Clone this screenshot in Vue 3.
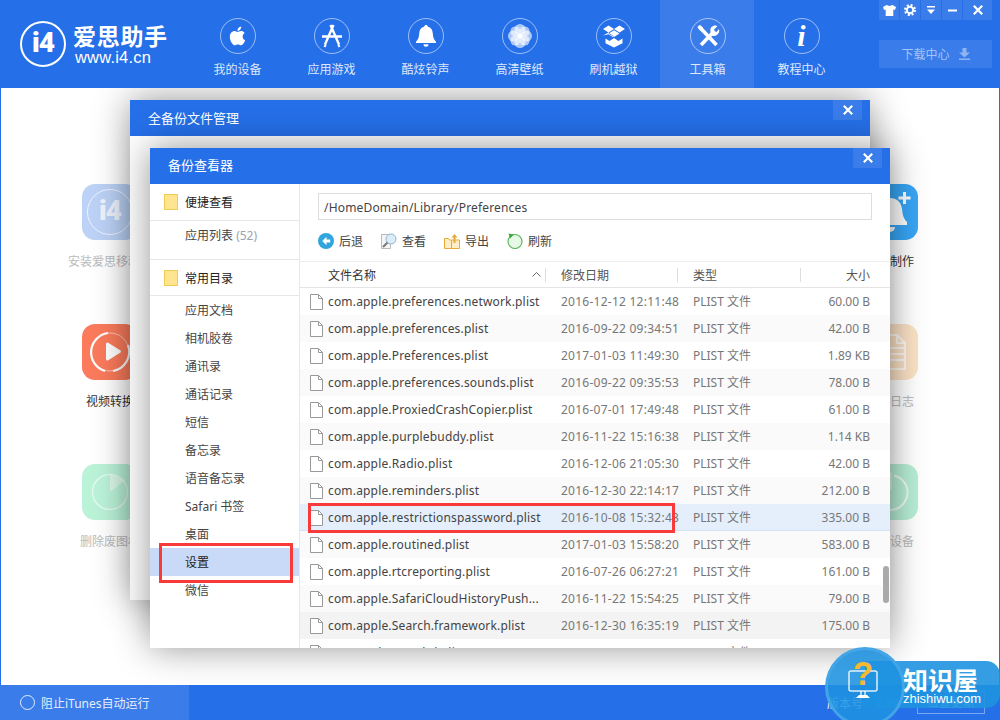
<script setup>
const navItems = [
  { key: 'device', label: '我的设备' },
  { key: 'app', label: '应用游戏' },
  { key: 'bell', label: '酷炫铃声' },
  { key: 'flower', label: '高清壁纸' },
  { key: 'box', label: '刷机越狱' },
  { key: 'tools', label: '工具箱', active: true },
  { key: 'info', label: '教程中心' },
]

const tiles = [
  { key: 'i4', label: '安装爱思移动端', cls: 'dim' },
  { key: 'ring', label: '铃声制作', cls: '' },
  { key: 'video', label: '视频转换', cls: '' },
  { key: 'doc', label: '查看日志', cls: 'dim' },
  { key: 'pie', label: '删除废图标', cls: 'dim' },
  { key: 'power', label: '关闭设备', cls: 'dim' },
]

const folders = ['应用文档', '相机胶卷', '通讯录', '通话记录', '短信', '备忘录', '语音备忘录', 'Safari 书签', '桌面', '设置', '微信']

const files = [
  ['com.apple.preferences.network.plist', '2016-12-12 12:11:48', '60.00 B', ''],
  ['com.apple.preferences.plist', '2016-09-22 09:34:51', '42.00 B', 'alt'],
  ['com.apple.Preferences.plist', '2017-01-03 11:49:30', '1.89 KB', ''],
  ['com.apple.preferences.sounds.plist', '2016-09-22 09:35:53', '78.00 B', 'alt'],
  ['com.apple.ProxiedCrashCopier.plist', '2016-07-01 17:49:48', '61.00 B', ''],
  ['com.apple.purplebuddy.plist', '2016-11-22 15:16:38', '1.14 KB', 'alt'],
  ['com.apple.Radio.plist', '2016-12-06 21:05:30', '42.00 B', ''],
  ['com.apple.reminders.plist', '2016-12-30 22:14:17', '212.00 B', 'alt'],
  ['com.apple.restrictionspassword.plist', '2016-10-08 15:32:43', '335.00 B', 'sel'],
  ['com.apple.routined.plist', '2017-01-03 15:58:20', '583.00 B', 'alt'],
  ['com.apple.rtcreporting.plist', '2016-07-26 06:27:21', '161.00 B', ''],
  ['com.apple.SafariCloudHistoryPush...', '2016-11-22 15:54:25', '79.00 B', 'alt'],
  ['com.apple.Search.framework.plist', '2016-12-30 16:35:19', '175.00 B', 'hover'],
  ['com.apple.searchd.plist', '2016-12-30 16:35:20', '180.00 B', ''],
]
</script>

<template>
  <div class="app">
    <header class="topbar">
      <div class="logo">
        <div class="logo-mark">i4</div>
        <div class="logo-text">
          <div class="logo-cn">爱思助手</div>
          <div class="logo-url">www.i4.cn</div>
        </div>
      </div>

      <nav class="nav">
        <div v-for="item in navItems" :key="item.key" :class="['nav-item', { active: item.active }]">
          <div class="nav-ring">
            <svg v-if="item.key === 'device'" width="22" height="22" viewBox="0 0 24 24" fill="#fff"><path d="M17.05 12.54c-.03-2.6 2.12-3.85 2.22-3.91-1.21-1.77-3.09-2.01-3.76-2.04-1.6-.16-3.12.94-3.93.94-.81 0-2.06-.92-3.39-.89-1.74.03-3.35 1.01-4.25 2.57-1.81 3.14-.46 7.8 1.3 10.35.86 1.25 1.89 2.65 3.24 2.6 1.3-.05 1.79-.84 3.36-.84s2.01.84 3.39.81c1.4-.02 2.28-1.27 3.14-2.53.99-1.45 1.4-2.85 1.42-2.92-.03-.01-2.72-1.04-2.74-4.14zM14.47 4.9c.72-.87 1.2-2.08 1.07-3.28-1.03.04-2.28.69-3.02 1.55-.66.77-1.24 2-1.09 3.18 1.15.09 2.32-.58 3.04-1.45z"/></svg>
            <svg v-else-if="item.key === 'app'" width="28" height="28" viewBox="0 0 28 28" fill="none" stroke="#fff" stroke-width="2.4"><path d="M15.5 3 7 22.5M12.5 3 21 22.5M4 14.5h20" /><path d="M6.5 25l1.2-2.5M21.5 25l-1.2-2.5" stroke-width="2"/></svg>
            <svg v-else-if="item.key === 'bell'" width="22" height="24" viewBox="0 0 22 24" fill="#fff"><path d="M11 1c1 0 1.7.7 1.8 1.7C16 3.4 17.6 6 17.8 9.500c.2 3.800 1 6 3.200 8.200v1.300H1v-1.300c2.200-2.200 3-4.400 3.200-8.200C4.400 6 6 3.400 9.200 2.700 9.300 1.700 10 1 11 1z"/><path d="M8.500 20.200h5a2.500 2.500 0 0 1-5 0z"/></svg>
            <svg v-else-if="item.key === 'flower'" width="26" height="26" viewBox="0 0 26 26"><g fill="#fff" fill-opacity=".62"><circle cx="13" cy="6.500" r="5.500"/><circle cx="13" cy="19.500" r="5.500"/><circle cx="6.500" cy="13" r="5.500"/><circle cx="19.500" cy="13" r="5.500"/><circle cx="8.400" cy="8.400" r="5"/><circle cx="17.600" cy="8.400" r="5"/><circle cx="8.400" cy="17.600" r="5"/><circle cx="17.600" cy="17.600" r="5"/></g><circle cx="13" cy="13" r="2.500" fill="#fff"/></svg>
            <svg v-else-if="item.key === 'box'" width="24" height="24" viewBox="0 0 24 24" fill="#fff"><path d="M6.500 1.500 12 5 6.500 8.500 1 5zM17.500 1.500 23 5l-5.500 3.500L12 5zM6.500 9.500 12 6.200l5.500 3.300L12 13zM1 11.500l5.500-3 5.500 4-1 .8-4.500-3z" fill-rule="evenodd"/><path d="M3.500 14.500l4 2.500 4.500-3 4.500 3 4-2.500v4.700L12 23.500l-8.500-4.300z"/></svg>
            <svg v-else-if="item.key === 'tools'" width="24" height="24" viewBox="0 0 24 24" fill="none" stroke="#fff"><path d="M3 2.500 20.500 21" stroke-width="3.600"/><path d="M3.500 1 1.500 3l2.500 3.500 2.500-.5.500-2.500z" fill="#fff" stroke="none"/><path d="M5 21 16 9.500" stroke-width="3.600"/><path d="M15 3.500c2-2.300 5-2.500 6.500-1.500L18 5.500l.8 1.700 1.700.8L23 5c.8 2.500-.2 5-2.500 6.300-1.500.8-3.300.8-4.500.2-1.700-2.300-2.200-5.700-1-8z" fill="#fff" stroke="none"/></svg>
            <span v-else class="nav-i">i</span>
          </div>
          <div class="nav-label">{{ item.label }}</div>
        </div>
      </nav>

      <div class="top-right">
        <div class="win-btns">
          <span class="win-btn">
            <svg width="13" height="11" viewBox="0 0 13 11" fill="#fff"><path d="M3.500 0 6.500 1 9.500 0 13 2l-1 3-1.700-.5V11H2.700V4.500L1 5 0 2z"/></svg>
          </span>
          <span class="win-btn">
            <svg width="12" height="12" viewBox="0 0 12 12" fill="none" stroke="#fff"><circle cx="6" cy="6" r="3.200" stroke-width="2"/><circle cx="6" cy="6" r="5" stroke-width="2" stroke-dasharray="2 1.930"/></svg>
          </span>
          <span class="win-btn">
            <svg width="10" height="10" viewBox="0 0 10 10" fill="#fff"><path d="M1 1h8v1.500H1zM1 4.500h8L5 9z"/></svg>
          </span>
          <span class="win-btn">
            <svg width="9" height="3" viewBox="0 0 9 3" fill="#fff"><path d="M0 .5h9v2H0z"/></svg>
          </span>
          <span class="win-btn close">
            <svg width="10" height="10" viewBox="0 0 10 10" stroke="#fff" stroke-width="2.200"><path d="M.8.8l8.400 8.400M9.200.8.8 9.200"/></svg>
          </span>
        </div>
        <div class="download">
          下载中心
          <svg width="11" height="12" viewBox="0 0 11 12" fill="#8db3f2"><path d="M3.500 0h4v4.500H11L5.500 9.500 0 4.500h3.500zM0 10.500h11V12H0z"/></svg>
        </div>
      </div>
    </header>

    <main class="main">
      <div class="tiles">
        <div v-for="tile in tiles" :key="tile.key" :class="['tile', tile.cls]">
          <div :class="['tile-icon', tile.key]">
            <div v-if="tile.key === 'i4'" class="tile-i4">i4</div>
            <svg v-else-if="tile.key === 'ring'" width="56" height="56" viewBox="0 0 56 56" fill="#fff"><path d="M28 14c7 0 11 4 12 11 .6 5 1 9 5 13v3H11v-3c4-4 4.400-8 5-13 1-7 5-11 12-11z"/><path d="M23 43h10a5 5 0 0 1-10 0z"/><path d="M41 8h3v4.500h4.500v3H44V20h-3v-4.500h-4.500v-3H41z"/></svg>
            <svg v-else-if="tile.key === 'video'" width="56" height="56" viewBox="0 0 56 56" fill="none" stroke="#fff"><circle cx="28" cy="28" r="19" stroke-width=".8" stroke-opacity=".7"/><path d="M26 9a19.500 19.500 0 0 0-3 38M31 47a19.500 19.500 0 0 0 15-26" stroke-width="2.200"/><path d="M24 20c0-1.200 1.200-1.900 2.200-1.300l12 7.500c1 .6 1 2 0 2.600l-12 7.500c-1 .6-2.200-.1-2.200-1.300z" fill="#fff" stroke="none"/></svg>
            <svg v-else-if="tile.key === 'doc'" width="56" height="56" viewBox="0 0 56 56" fill="none" stroke="#fff" stroke-opacity=".75" stroke-width="2"><path d="M18 11h17l8 8v26H18z"/><path d="M35 11v8h8M23 24h19M23 30h19M23 36h19"/></svg>
            <svg v-else-if="tile.key === 'pie'" width="56" height="56" viewBox="0 0 56 56" fill="none" stroke="#fff" stroke-opacity=".55" stroke-width="1.500"><circle cx="28" cy="28" r="17.500"/><path d="M28 28V11a17 17 0 0 1 13.500 6.500z" fill="#fff" fill-opacity=".45" stroke="none"/></svg>
            <svg v-else width="56" height="56" viewBox="0 0 56 56" fill="none" stroke="#fff" stroke-opacity=".75" stroke-width="2"><path d="M32 11.500A17.500 17.500 0 1 1 24 11.500"/><path d="M28 8v18" stroke-width="3" stroke-opacity=".5"/></svg>
          </div>
          <div class="tile-label">{{ tile.label }}</div>
        </div>
      </div>

      <section class="dialog outer">
        <div class="dialog-title">
          全备份文件管理
          <span class="dialog-close"><svg width="10" height="10" viewBox="0 0 10 10" stroke="#fff" stroke-width="2.200"><path d="M.8.8l8.400 8.400M9.200.8.8 9.200"/></svg></span>
        </div>
      </section>

      <section class="dialog inner">
        <div class="dialog-title">
          备份查看器
          <span class="dialog-close"><svg width="10" height="10" viewBox="0 0 10 10" stroke="#fff" stroke-width="2.200"><path d="M.8.8l8.400 8.400M9.200.8.8 9.200"/></svg></span>
        </div>

        <div class="viewer">
          <aside class="side">
            <div class="side-head first"><i class="folder"></i>便捷查看</div>
            <div class="side-sub">应用列表 <span class="count">(52)</span></div>
            <div class="side-head"><i class="folder"></i>常用目录</div>
            <div v-for="name in folders" :key="name" :class="['side-item', { selected: name === '设置' }]">{{ name }}</div>
          </aside>

          <div class="content">
            <div class="path">/HomeDomain/Library/Preferences</div>

            <div class="toolbar">
              <span class="tool">
                <svg width="16" height="16" viewBox="0 0 16 16"><circle cx="8" cy="8" r="8" fill="#31a5dd"/><path d="M8.500 3.800 4.300 8l4.200 4.200V9.500h3.700v-3H8.500z" fill="#fff"/></svg>
                后退
              </span>
              <span class="tool">
                <svg width="16" height="16" viewBox="0 0 16 16" fill="none"><path d="M.5 1.500h9v14h-9z" fill="#f5f5f5" stroke="#bbb"/><circle cx="10" cy="6" r="5" fill="#dcedf7" stroke="#8fb8d2"/><path d="M6.500 9.500 2 14" stroke="#777" stroke-width="2"/></svg>
                查看
              </span>
              <span class="tool">
                <svg width="16" height="16" viewBox="0 0 16 16" fill="none"><path d="M.5 5.500h4l1 1.500h2v8.500h-7z M7.500 7h8v8.500h-8z" fill="#fdeec6" stroke="#e5a93c"/><path d="M10.500 1 7.500 4.500h2V10h2V4.500h2z" fill="#e5a93c"/></svg>
                导出
              </span>
              <span class="tool">
                <svg width="16" height="16" viewBox="0 0 16 16" fill="none"><circle cx="8" cy="8.500" r="7" fill="#e8f8e6" stroke="#5cb85c" stroke-width="1.200"/><path d="M1.500 .5 7 1.500 3 5.500z" fill="#3ea83e"/></svg>
                刷新
              </span>
            </div>

            <div class="thead">
              <div class="th name">文件名称<svg class="caret" width="9" height="5" viewBox="0 0 9 5" fill="none" stroke="#666"><path d="M.5 4.500l4-4 4 4"/></svg></div>
              <div class="th">修改日期</div>
              <div class="th">类型</div>
              <div class="th size">大小</div>
            </div>

            <div class="tbody">
              <div v-for="f in files" :key="f[0]" :class="['row', f[3]]">
                <div class="cell name">
                  <svg width="13" height="16" viewBox="0 0 13 16" fill="#fff" stroke="#999"><path d="M.5.500h8l4 4v11H.5z"/><path d="M8.500.500v4h4" fill="none"/></svg>
                  <span>{{ f[0] }}</span>
                </div>
                <div class="cell date">{{ f[1] }}</div>
                <div class="cell">PLIST 文件</div>
                <div class="cell size">{{ f[2] }}</div>
              </div>
              <div class="scroll-thumb"></div>
            </div>
          </div>
        </div>

        <div class="mark mark-side"></div>
        <div class="mark mark-row"></div>
      </section>
    </main>

    <footer class="footer">
      <div class="itunes"><i class="radio"></i>阻止iTunes自动运行</div>
      <div class="version">版本号：7.29</div>
      <div class="update">检查更新</div>
    </footer>

    <div class="badge">
      <div class="badge-bar"></div>
      <div class="badge-disc"></div>
      <svg class="badge-screen" width="30" height="30" viewBox="0 0 30 30" fill="none" stroke="#fff" stroke-opacity=".85" stroke-width="1.500"><rect x="1" y="1" width="28" height="20" rx="2"/><path d="M13 21v5M17 21v5" /><path d="M8 28h14l-3-3h-8z" fill="#fff" stroke="none"/></svg>
      <span class="badge-q">?</span>
      <div class="badge-cn">知识屋</div>
      <div class="badge-en">zhishiwu.com</div>
    </div>
  </div>
</template>

<style>
html, body {
  margin: 0;
  background: #fff;
}
</style>

<style scoped>
.app {
  position: relative;
  display: flex;
  flex-direction: column;
  width: 1000px;
  height: 720px;
  overflow: hidden;
  font-family: "Noto Sans", "Noto Sans CJK SC", sans-serif;
  font-size: 12px;
  color: #333;
}

/* top bar */
.topbar {
  display: flex;
  flex: none;
  height: 88px;
  background: #256fe8;
  color: #fff;
}

.logo {
  display: flex;
  flex: none;
  width: 190px;
  padding: 21px 0 0 20px;
  box-sizing: border-box;
}

.logo-mark {
  width: 46px;
  height: 46px;
  box-sizing: border-box;
  border: 2px solid #fff;
  border-radius: 50%;
  font: 900 28px/40px Roboto, sans-serif;
  letter-spacing: -1px;
  text-align: center;
}

.logo-text {
  margin-left: 7px;
}

.logo-cn {
  margin-top: 2px;
  font-size: 23px;
  font-weight: 700;
  line-height: 27px;
  letter-spacing: .7px;
}

.logo-url {
  margin-left: 2px;
  font-size: 16.500px;
  line-height: 15px;
  letter-spacing: .2px;
  font-family: "Liberation Sans", sans-serif;
}

.nav {
  display: flex;
}

.nav-item {
  display: flex;
  flex-direction: column;
  align-items: center;
  width: 94px;
  padding: 18px 0 0 1px;
  box-sizing: border-box;
}

.nav-item.active {
  background: #3a7ce9;
}

.nav-ring {
  display: flex;
  align-items: center;
  justify-content: center;
  width: 36px;
  height: 36px;
  box-sizing: border-box;
  border: 1px solid rgba(255, 255, 255, .55);
  border-radius: 50%;
}

.nav-i {
  font: italic bold 30px/34px "Liberation Serif", serif;
}

.nav-label {
  margin-top: 7px;
  line-height: 18px;
  color: #dfe9fb;
}

.top-right {
  display: flex;
  flex-direction: column;
  margin-left: 31px;
  width: 113px;
}

.win-btns {
  display: flex;
  gap: 1px;
}

.win-btn {
  display: flex;
  align-items: center;
  justify-content: center;
  width: 20px;
  height: 20px;
  background: #3a7ce9;
}

.win-btn.close {
  width: 29px;
}

.download {
  display: flex;
  align-items: center;
  justify-content: center;
  gap: 9px;
  height: 28px;
  margin-top: 20px;
  background: #3a7ce9;
  color: #a5c4f6;
}

/* page behind the dialogs */
.main {
  position: relative;
  flex: 1;
  min-height: 0;
  overflow: hidden;
  background: #fff;
  border-left: 1px solid #256fe8;
  border-right: 1px solid #256fe8;
}

.tiles {
  display: grid;
  grid-template-columns: 96px 96px;
  grid-auto-rows: 140px;
  justify-content: space-between;
  padding: 96px 61px 0;
}

.tile {
  display: flex;
  flex-direction: column;
  align-items: center;
  white-space: nowrap;
}

.tile-icon {
  width: 56px;
  height: 56px;
  flex: none;
  border-radius: 13px;
}

.tile-label {
  margin-top: 13px;
  line-height: 18px;
  color: #333;
}

.tile.dim .tile-label {
  color: #bbb;
}

.tile-icon.i4 { background: #bcd2f6; }
.tile-icon.ring { background: #38a6f6; }
.tile-icon.video { background: #fb7b5c; }
.tile-icon.doc { background: #fbe2c6; }
.tile-icon.pie { background: #bbf3d8; }
.tile-icon.power { background: #b7eed6; }

.tile-i4 {
  width: 46px;
  height: 46px;
  margin: 5px;
  position: relative;
  top: 0;
  box-sizing: border-box;
  border: 1px solid #f0f5ff;
  border-radius: 50%;
  color: #eef3fd;
  font: 900 28px/42px Roboto, sans-serif;
  letter-spacing: -1px;
  text-align: center;
}

/* dialogs */
.dialog {
  position: absolute;
  width: 740px;
  height: 500px;
  background: #fff;
  box-shadow: 0 0 34px rgba(0, 0, 0, .42);
}

.dialog.outer {
  left: 129px;
  top: 12px;
}

.dialog.inner {
  left: 149px;
  top: 60px;
  display: flex;
  flex-direction: column;
}

.dialog-title {
  position: relative;
  flex: none;
  height: 36px;
  padding-left: 18px;
  background: #256fe8;
  color: #fff;
  font-size: 13px;
  line-height: 36px;
}

.dialog.inner .dialog-title {
  line-height: 35px;
}

.dialog-close {
  position: absolute;
  top: 0;
  right: 8px;
  display: flex;
  align-items: center;
  justify-content: center;
  width: 29px;
  height: 20px;
  background: #3a7ce9;
}

.viewer {
  display: flex;
  flex: 1;
  min-height: 0;
}

.side {
  flex: none;
  width: 150px;
  box-sizing: border-box;
  border-right: 1px solid #e8e8e8;
}

.side-head {
  display: flex;
  align-items: center;
  height: 36px;
  padding-left: 14px;
  box-sizing: border-box;
  border-bottom: 1px solid #e6e6e6;
  color: #222;
}

.side-head.first {
  height: 37px;
}

.folder {
  width: 14px;
  height: 16px;
  margin-right: 7px;
  background: #ffe58f;
  border: 1px solid #f2cb55;
  box-sizing: border-box;
}

.side-sub {
  height: 39px;
  padding-left: 35px;
  box-sizing: border-box;
  border-bottom: 1px solid #e6e6e6;
  line-height: 30px;
  color: #444;
}

.count {
  color: #9aa3b2;
}

.side-item {
  height: 28px;
  padding-left: 35px;
  line-height: 30px;
  color: #444;
}

.side-item.selected {
  background: #c8daf7;
  color: #222;
}

.content {
  display: flex;
  flex: 1;
  flex-direction: column;
  min-width: 0;
}

.path {
  flex: none;
  height: 27px;
  margin: 9px 18px 0;
  padding-left: 5px;
  box-sizing: border-box;
  border: 1px solid #ddd;
  font-size: 12px;
  line-height: 27px;
  letter-spacing: .17px;
  color: #444;
}

.toolbar {
  display: flex;
  flex: none;
  gap: 18px;
  height: 26px;
  margin: 8px 0 0 18px;
}

.tool {
  display: inline-flex;
  align-items: center;
  gap: 5px;
  color: #444;
}

.thead,
.row {
  display: grid;
  grid-template-columns: 245px 132px 123px 90px;
}

.thead {
  flex: none;
  height: 27px;
  margin-top: 7px;
  box-sizing: border-box;
  border-top: 1px solid #eee;
  border-bottom: 1px solid #e4e4e4;
  color: #555;
}

.th {
  position: relative;
  padding-left: 16px;
  line-height: 27px;
}

.th + .th::before {
  content: '';
  position: absolute;
  left: 0;
  top: 6px;
  height: 14px;
  border-left: 1px solid #ddd;
}

.th.name {
  padding-left: 28px;
  color: #333;
}

.caret {
  position: absolute;
  right: 4px;
  top: 10px;
}

.th.size,
.cell.size {
  padding: 0 20px 0 0;
  text-align: right;
}

.tbody {
  position: relative;
  flex: 1;
  min-height: 0;
  overflow: hidden;
}

.row {
  height: 27px;
  box-sizing: border-box;
  line-height: 28px;
  color: #777;
}

.row.alt {
  background: #fafafa;
}

.row.hover {
  background: #f3f3f3;
}

.row.sel {
  background: #e5effc;
  border-bottom: 1px solid #d5e2f5;
}

.cell {
  padding-left: 16px;
  white-space: nowrap;
}

.cell.date {
  letter-spacing: .25px;
}

.cell.name {
  display: flex;
  align-items: center;
  gap: 5px;
  padding-left: 10px;
  letter-spacing: .17px;
  color: #444;
}

.scroll-thumb {
  position: absolute;
  right: 1px;
  top: 278px;
  width: 6px;
  height: 37px;
  border-radius: 3px;
  background: #aaa;
}

/* red annotation boxes */
.mark {
  position: absolute;
  box-sizing: border-box;
  border: 3px solid #f93a3a;
}

.mark-side {
  left: 9px;
  top: 395px;
  width: 134px;
  height: 40px;
}

.mark-row {
  left: 158px;
  top: 355px;
  width: 367px;
  height: 30px;
}

.footer {
  display: flex;
  flex: none;
  align-items: center;
  height: 35px;
  background: #256fe8;
  color: #fff;
}

.itunes {
  display: flex;
  align-items: center;
  width: 189px;
  height: 100%;
  padding-left: 20px;
  box-sizing: border-box;
  background: #3a7ce9;
  color: #e6eefc;
}

.radio {
  width: 15px;
  height: 15px;
  margin-right: 6px;
  box-sizing: border-box;
  border: 1px solid #e6eefc;
  border-radius: 50%;
}

.version {
  margin-left: 638px;
  width: 90px;
}

.update {
  width: 68px;
  height: 23px;
  box-sizing: border-box;
  border: 1px solid #7aa6ef;
  line-height: 21px;
  text-align: center;
}

/* watermark in the corner */
.badge {
  position: absolute;
  left: 825px;
  top: 647px;
  width: 175px;
  height: 73px;
}

.badge-bar {
  position: absolute;
  left: 40px;
  top: 14px;
  right: 0;
  height: 47px;
  border-radius: 0 14px 14px 0;
  background: rgba(30, 146, 224, .9);
}

.badge-disc {
  position: absolute;
  left: 0;
  top: 0;
  width: 80px;
  height: 80px;
  box-sizing: border-box;
  border: 3px solid rgba(70, 165, 232, .95);
  border-radius: 50%;
  background: rgba(30, 146, 224, .88);
}

.badge-screen {
  position: absolute;
  left: 23px;
  top: 23px;
}

.badge-q {
  position: absolute;
  left: 28px;
  top: 9px;
  color: #f6b92f;
  font: bold 33px/36px "Liberation Sans", sans-serif;
}

.badge-cn {
  position: absolute;
  left: 78px;
  top: 17px;
  color: #fff;
  font-size: 25px;
  font-weight: 700;
  line-height: 32px;
}

.badge-en {
  position: absolute;
  left: 78px;
  top: 44px;
  color: #fff;
  font: 13px/16px "Liberation Sans", sans-serif;
}
</style>
